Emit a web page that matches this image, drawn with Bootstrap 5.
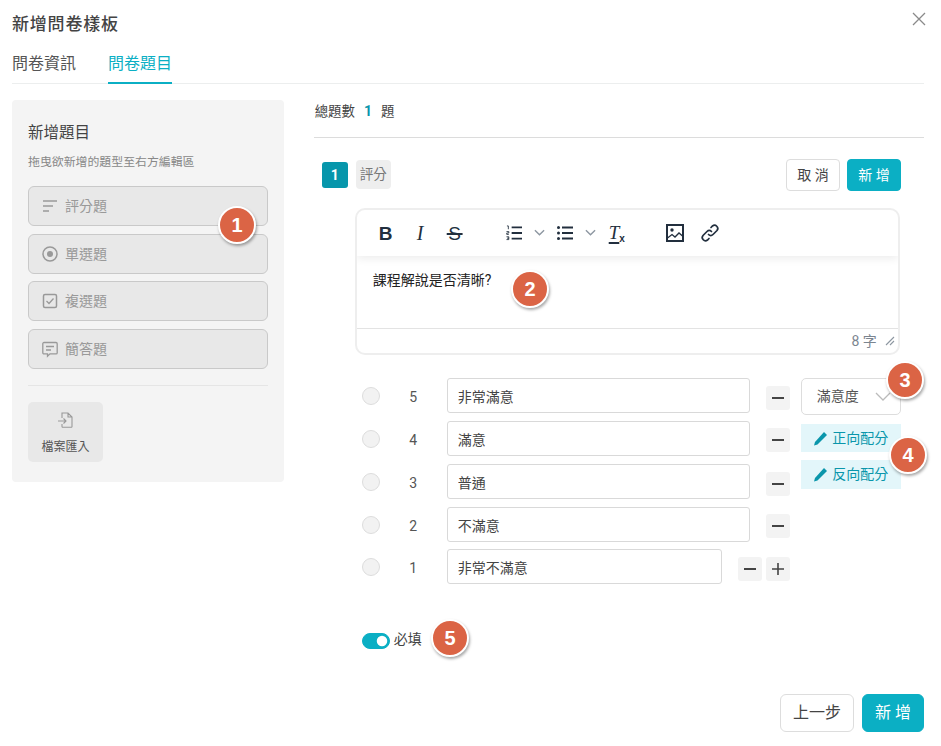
<!DOCTYPE html>
<html lang="zh-Hant">
<head>
<meta charset="utf-8">
<title>新增問卷樣板</title>
<link href="https://cdn.jsdelivr.net/npm/bootstrap@5.3.0/dist/css/bootstrap.min.css" rel="stylesheet">
<style>
html,body{height:746px;overflow:hidden;background:#fff}
body{font-family:Roboto,"Noto Sans CJK TC",sans-serif;color:#333;font-size:14px}
.shell{position:relative;width:941px;height:746px;padding:0 17px 0 12px}
.mhead{height:47px;padding-top:13px;font-size:17px;letter-spacing:.8px;font-weight:500;color:#444;line-height:22px}
.closer{position:absolute;left:912px;top:12px;width:14px;height:14px;display:block}
.tabsbar{height:37px;border-bottom:1px solid #eceeee;gap:32px;font-size:16px;line-height:20px;padding-top:7px}
.tabsbar span{display:block;height:30px;color:#555}
.tabsbar .on{color:#0bafc4;border-bottom:2px solid #0bafc4;height:30px}
.mainrow{padding-top:16px;gap:29px}
.sidep{width:272px;height:382px;background:#f4f4f4;border-radius:4px;padding:23px 16px 0}
.sidet{font-size:15.5px;line-height:20px;color:#444;margin-bottom:10px}
.sides{font-size:11.9px;line-height:18px;color:#888;margin-bottom:15px}
.qtype{height:40px;background:#e8e8e8;border:1px solid #c9c9c9;border-radius:6px;margin-bottom:8px;color:#999;font-size:14px;display:flex;align-items:center;padding-left:12px;gap:6px}
.qtype:nth-of-type(4){margin-bottom:7px}
.qtype svg{width:18px;height:18px;flex:none}
.sidehr{border-top:1px solid #e5e5e5;margin:16px 0}
.importb{width:75px;height:60px;background:#e8e8e8;border-radius:5px;display:flex;flex-direction:column;align-items:center;padding-top:9px;font-size:12px;color:#555;gap:9px}
.mainc{width:611px;margin-left:1px}
.totals{height:38px;border-bottom:1px solid #dcdcdc;font-size:13.4px;line-height:23px;padding-left:1px;color:#444}
.totals b{color:#0a96ab;margin:0 9px;font-weight:700;font-size:14px}
.qhead{padding:22px 23px 0 8px;height:70px}
.qno{width:26px;height:26px;border-radius:3px;background:#0796ab;color:#fff;font-size:14px;font-weight:700;display:flex;align-items:center;justify-content:center;margin-top:2px}
.qkind{width:35px;height:29px;background:#eee;border-radius:4px;color:#777;font-size:13.5px;display:flex;align-items:center;justify-content:center;margin-left:8px}
.btngrp{margin-top:-1px;gap:7px}
.smbtn{height:32px;border-radius:4px;font-size:14px;padding:0;line-height:30px;width:54px}
.ghostb{background:#fff;border:1px solid #ddd;color:#444}
.ghostb:hover{background:#fff}
.fillb{background:#0bafc4;border:1px solid #0bafc4;color:#fff}
.fillb:hover{background:#0bafc4;color:#fff}
.editor{width:545px;height:147px;margin-left:41px;border:2px solid #eee;border-radius:10px;display:flex;flex-direction:column;overflow:hidden}
.toolb{height:46px;flex:none;box-shadow:0 3px 8px rgba(0,0,0,.07);position:relative;color:#222f3e}
.tool{position:absolute;top:0;height:46px;display:flex;align-items:center;justify-content:center}
.tlet{font-family:"Liberation Sans",sans-serif;font-size:19px;color:#222f3e;line-height:1}
.tlet s{text-decoration-thickness:2px}
.clearf{font-family:"Liberation Serif",serif;font-style:italic;font-size:19px}
.clearf u{text-decoration-thickness:2px;text-underline-offset:3px}
.clearf i{font-family:"Liberation Sans",sans-serif;font-style:normal;font-weight:700;font-size:10px;margin-top:10px}
.ebody{flex:1;padding:13px 16px;font-size:14px;line-height:22px;color:#222}
.efoot{height:25px;flex:none;border-top:1px solid #e3e3e3;font-size:14px;color:#7b8590;display:flex;justify-content:flex-end;align-items:center;padding-right:3px;gap:8px}
.optwrap{padding:23px 0 0 48px;gap:11px}
.optrow{height:35px;margin-bottom:8px;display:flex;align-items:center}
.optrow:nth-child(4){margin-bottom:7px}
.optrow:last-child{margin-bottom:0}
.rdot{width:18px;height:18px;border-radius:50%;background:#f2f2f2;border:1px solid #ddd;flex:none}
.onum{width:67px;text-align:center;flex:none;font-size:14px;color:#555;padding-top:3px}
.opti{width:303px;height:35px;flex:none;font-size:14px;padding:0 10px;border:1px solid #d9d9d9;border-radius:3px;color:#444}
.opti.shorter{width:275px}
.sqb{width:24px;height:24px;background:#f3f3f3;border-radius:3px;flex:none;display:flex;align-items:center;justify-content:center;margin-top:5px}
.optrow:nth-child(even) .sqb{margin-top:3px}
.sqb svg{width:14px;height:14px}
.ctrlc{width:100px}
.selbox{height:37px;border:1px solid #ddd;border-radius:5px;display:flex;align-items:center;padding-left:15px;font-size:14px;color:#555;margin-bottom:9px}
.scorebtn{background:#e3f6fa;color:#0a96ab;font-size:14px;display:flex;align-items:center;justify-content:center;gap:4px;height:28px;margin-bottom:8px}
.scorebtn+.scorebtn{height:29px}
.togglerow{padding:49px 0 0 48px;height:95px}
.togglerow .form-check-input{width:28px;height:16px;margin:0;background-color:#0bafc4;border-color:#0bafc4;float:none;margin-left:0}
.togglerow .form-switch{padding:0;min-height:0;display:flex;margin:0}
.togglerow label{font-size:14px;line-height:16px;margin:-2px 0 0 4px;color:#444}
.footb{position:absolute;right:17px;top:694px;gap:8px}
.bigb{height:38px;border-radius:6px;font-size:16px;padding:0;line-height:36px}
.marker{position:absolute;width:34px;height:34px;border-radius:50%;background:#db6445;border:2px solid #fff;box-sizing:content-box;box-shadow:1px 2px 3px rgba(0,0,0,.35);color:#fff;font-weight:700;font-size:20px;font-family:"Liberation Sans",sans-serif;display:flex;align-items:center;justify-content:center;line-height:1}
</style>
</head>
<body>
<div class="shell">
  <div class="mhead">新增問卷樣板</div>
  <svg class="closer" viewBox="0 0 14 14"><path d="M1 1l12 12M13 1L1 13" stroke="#8a8a8a" stroke-width="1.3" fill="none"/></svg>
  <div class="tabsbar d-flex"><span>問卷資訊</span><span class="on">問卷題目</span></div>

  <div class="mainrow d-flex">
    <aside class="sidep flex-none">
      <div class="sidet">新增題目</div>
      <div class="sides">拖曳欲新增的題型至右方編輯區</div>
      <div class="qtype"><svg viewBox="0 0 18 18"><path d="M2 4h14M2 9h10M2 14h6" stroke="#999" stroke-width="1.5" fill="none"/></svg>評分題</div>
      <div class="qtype"><svg viewBox="0 0 18 18"><circle cx="9" cy="9" r="7" stroke="#999" stroke-width="1.5" fill="none"/><circle cx="9" cy="9" r="3" fill="#999"/></svg>單選題</div>
      <div class="qtype"><svg viewBox="0 0 18 18"><rect x="2.5" y="2.5" width="13" height="13" rx="1.5" stroke="#999" stroke-width="1.5" fill="none"/><path d="M5.5 9l2.5 2.5 4.5-5" stroke="#999" stroke-width="1.3" fill="none"/></svg>複選題</div>
      <div class="qtype"><svg viewBox="0 0 18 18"><path d="M3 2.5h12a1.2 1.2 0 0 1 1.2 1.2v9a1.2 1.2 0 0 1-1.2 1.2H9l-2.5 2.4v-2.4H3a1.2 1.2 0 0 1-1.2-1.2v-9A1.2 1.2 0 0 1 3 2.5zM5 6.5h8M5 10h5" stroke="#999" stroke-width="1.3" fill="none"/></svg>簡答題</div>
      <div class="sidehr"></div>
      <div class="importb"><svg width="18" height="18" viewBox="0 0 18 18"><path d="M5 7V2h6l4 4v9.5a.8.8 0 0 1-.8.8H5.8A.8.8 0 0 1 5 15.500V13M11 2v4h4M1 10h8M6.500 7.500L9 10l-2.500 2.500" stroke="#999" stroke-width="1.100" fill="none"/></svg>檔案匯入</div>
    </aside>

    <main class="mainc">
      <div class="totals">總題數<b>1</b>題</div>
      <div class="qhead d-flex">
        <div class="qno">1</div>
        <div class="qkind">評分</div>
        <div class="ms-auto d-flex btngrp align-items-start">
          <button type="button" class="btn smbtn ghostb">取 消</button>
          <button type="button" class="btn smbtn fillb">新 增</button>
        </div>
      </div>
      <div class="editor">
        <div class="toolb">
          <span class="tool tlet fw-bold" style="left:22px">B</span>
          <span class="tool" style="left:60px;font-family:'Liberation Serif',serif;font-style:italic;font-size:20px">I</span>
          <span class="tool tlet" style="left:90px"><s>&#8202;S&#8202;</s></span>
          <span class="tool" style="left:149px"><svg width="16" height="18" viewBox="0 0 17 18"><path d="M6 3h11M6 9h11M6 15h11" stroke="#222f3e" stroke-width="2"/><path d="M1 1.500h1.500V5M.5 7.500h2.500v1.500H.800v1.500H3M.5 13H3v1.500H1.500 3V16H.5" stroke="#222f3e" stroke-width=".9" fill="none"/></svg></span>
          <span class="tool" style="left:177px"><svg width="11" height="8" viewBox="0 0 12 8"><path d="M1 1l5 5 5-5" stroke="#8d97a1" stroke-width="1.500" fill="none"/></svg></span>
          <span class="tool" style="left:200px"><svg width="16" height="16" viewBox="0 0 16 16"><path d="M5 2.500h11M5 8h11M5 13.500h11" stroke="#222f3e" stroke-width="2"/><circle cx="1.500" cy="2.500" r="1.500" fill="#222f3e"/><circle cx="1.500" cy="8" r="1.500" fill="#222f3e"/><circle cx="1.500" cy="13.500" r="1.500" fill="#222f3e"/></svg></span>
          <span class="tool" style="left:228px"><svg width="11" height="8" viewBox="0 0 12 8"><path d="M1 1l5 5 5-5" stroke="#8d97a1" stroke-width="1.500" fill="none"/></svg></span>
          <span class="tool clearf" style="left:252px"><u>T</u><i>x</i></span>
          <span class="tool" style="left:309px"><svg width="18" height="18" viewBox="0 0 18 18"><rect x="1" y="1" width="16" height="16" fill="none" stroke="#222f3e" stroke-width="2"/><circle cx="6" cy="6" r="1.700" fill="#222f3e"/><path d="M1.500 14l4.500-3.500 3 2.500 4-4 3.500 3" stroke="#222f3e" stroke-width="1.300" fill="none"/></svg></span>
          <span class="tool" style="left:343px"><svg width="20" height="20" viewBox="0 0 20 20"><g fill="none" stroke="#222f3e" stroke-width="1.700" stroke-linecap="round"><path d="M8.500 11.500a3.200 3.200 0 0 0 4.500 0l4-4a3.200 3.200 0 0 0-4.500-4.500l-1.500 1.500"/><path d="M11.500 8.500a3.200 3.200 0 0 0-4.500 0l-4 4A3.200 3.200 0 0 0 7.500 17L9 15.500"/></g></svg></span>
        </div>
        <div class="ebody">課程解說是否清晰?</div>
        <div class="efoot"><span>8 字</span><svg width="10" height="10" viewBox="0 0 10 10"><path d="M1 9l8-8M5 9l4-4" stroke="#8d97a1" stroke-width="1.100"/></svg></div>
      </div>

      <div class="optwrap d-flex">
        <div class="flex-none">
          <div class="optrow"><span class="rdot"></span><span class="onum">5</span><input class="form-control opti" value="非常滿意"><span class="sqb ms-3"><svg viewBox="0 0 14 14"><path d="M1 7h12" stroke="#444" stroke-width="2"/></svg></span></div>
          <div class="optrow"><span class="rdot"></span><span class="onum">4</span><input class="form-control opti" value="滿意"><span class="sqb ms-3"><svg viewBox="0 0 14 14"><path d="M1 7h12" stroke="#444" stroke-width="2"/></svg></span></div>
          <div class="optrow"><span class="rdot"></span><span class="onum">3</span><input class="form-control opti" value="普通"><span class="sqb ms-3"><svg viewBox="0 0 14 14"><path d="M1 7h12" stroke="#444" stroke-width="2"/></svg></span></div>
          <div class="optrow"><span class="rdot"></span><span class="onum">2</span><input class="form-control opti" value="不滿意"><span class="sqb ms-3"><svg viewBox="0 0 14 14"><path d="M1 7h12" stroke="#444" stroke-width="2"/></svg></span></div>
          <div class="optrow"><span class="rdot"></span><span class="onum">1</span><input class="form-control opti shorter" value="非常不滿意"><span class="sqb ms-3"><svg viewBox="0 0 14 14"><path d="M1 7h12" stroke="#444" stroke-width="2"/></svg></span><span class="sqb ms-1"><svg viewBox="0 0 14 14"><path d="M1 7h12M7 1v12" stroke="#444" stroke-width="1.600"/></svg></span></div>
        </div>
        <div class="ctrlc flex-none">
          <div class="selbox">滿意度<svg class="ms-3" width="16" height="10" viewBox="0 0 16 10"><path d="M1 1l7 7 7-7" stroke="#bbb" stroke-width="1.300" fill="none"/></svg></div>
          <div class="scorebtn"><svg width="15" height="15" viewBox="0 0 15 15"><path d="M11 1l3 3-9.500 9.500L1 14.500 2 11z" fill="#0a96ab"/></svg>正向配分</div>
          <div class="scorebtn"><svg width="15" height="15" viewBox="0 0 15 15"><path d="M11 1l3 3-9.500 9.500L1 14.500 2 11z" fill="#0a96ab"/></svg>反向配分</div>
        </div>
      </div>

      <div class="togglerow d-flex align-items-start">
        <div class="form-check form-switch"><input class="form-check-input" type="checkbox" id="reqd" checked></div>
        <label for="reqd">必填</label>
      </div>
    </main>
  </div>

  <div class="footb d-flex">
    <button type="button" class="btn bigb ghostb" style="width:74px">上一步</button>
    <button type="button" class="btn bigb fillb" style="width:62px">新 增</button>
  </div>

  <span class="marker" style="left:218px;top:206px">1</span>
  <span class="marker" style="left:511px;top:270px">2</span>
  <span class="marker" style="left:886px;top:361px">3</span>
  <span class="marker" style="left:889px;top:436px">4</span>
  <span class="marker" style="left:431px;top:619px">5</span>
</div>
<script src="https://cdn.jsdelivr.net/npm/bootstrap@5.3.0/dist/js/bootstrap.bundle.min.js"></script>
</body>
</html>
